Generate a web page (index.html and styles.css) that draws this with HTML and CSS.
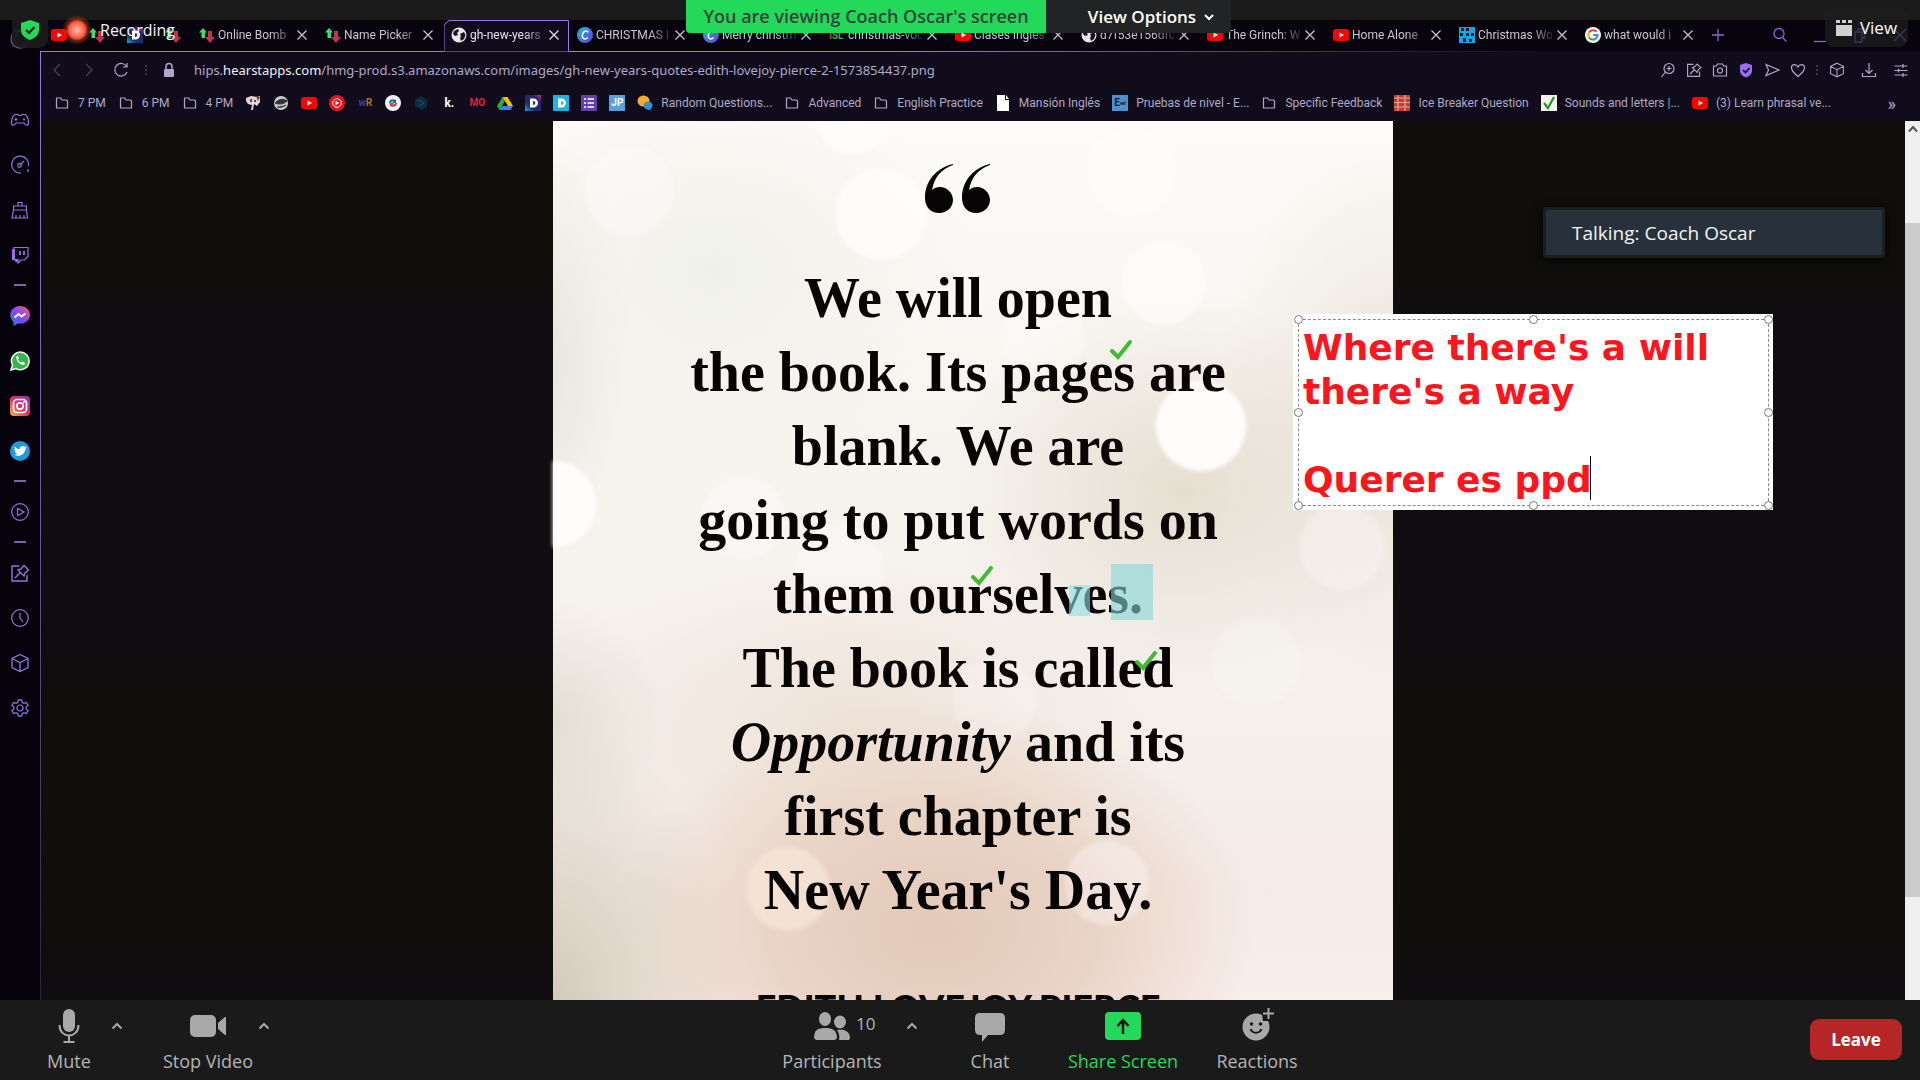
FILE: index.html
```html
<!DOCTYPE html>
<html lang="en">
<head>
<meta charset="utf-8">
<title>Screen share</title>
<link rel="stylesheet" href="styles.css">
</head>
<body>
<svg class="defs" aria-hidden="true">
  <defs>
    <linearGradient id="g-canva" x1="0" y1="0" x2="1" y2="1"><stop offset="0" stop-color="#19c3d8"/><stop offset="1" stop-color="#6a35d9"/></linearGradient>
    <linearGradient id="g-msg" x1="0" y1="1" x2="1" y2="0"><stop offset="0" stop-color="#1a7cf5"/><stop offset=".5" stop-color="#8a45f0"/><stop offset="1" stop-color="#f7605f"/></linearGradient>
    <linearGradient id="g-ig" x1="0" y1="1" x2="1" y2="0"><stop offset="0" stop-color="#fbb34a"/><stop offset=".5" stop-color="#dd2f63"/><stop offset="1" stop-color="#7a3fc0"/></linearGradient>
    <linearGradient id="g-d" x1="0" y1="1" x2="1" y2="0"><stop offset="0" stop-color="#12b9e6"/><stop offset=".3" stop-color="#20296a"/><stop offset=".75" stop-color="#20296a"/><stop offset="1" stop-color="#e01aa0"/></linearGradient>
    <radialGradient id="g-rec"><stop offset="0" stop-color="#ffc0b0"/><stop offset=".45" stop-color="#ff6a55"/><stop offset=".6" stop-color="#e8482f"/><stop offset=".7" stop-color="#b23a14" stop-opacity=".6"/><stop offset="1" stop-color="#b23a14" stop-opacity="0"/></radialGradient>
  </defs>
  <symbol id="yt" viewBox="0 0 16 16"><rect y="2" width="16" height="12" rx="3" fill="#f00"/><path d="M6.500 5.500v5L11 8z" fill="#fff"/></symbol>
  <symbol id="arrows" viewBox="0 0 16 16"><path d="M4 1l4 4.500H6V11H2.500V5.500H0z" fill="#3fdc6a"/><path d="M9 4h4v6h3l-5 6-5-6h3z" fill="#c2344c"/></symbol>
  <symbol id="dd" viewBox="0 0 16 16"><rect width="16" height="16" fill="url(#g-d)"/><path d="M5 3.500h3.500a4.500 4.500 0 0 1 0 9H5zM8 6v4c3 0 3-4 0-4" fill="#fff" fill-rule="evenodd"/></symbol>
  <symbol id="dc" viewBox="0 0 16 16"><rect width="16" height="16" rx="1" fill="#19b5e6"/><path d="M5 3.500h3.500a4.500 4.500 0 0 1 0 9H5zM8 6v4c3 0 3-4 0-4" fill="#fff" fill-rule="evenodd"/></symbol>
  <symbol id="globe" viewBox="0 0 16 16"><circle cx="8" cy="8" r="7.500" fill="#e8e6ec"/><path d="M3 4l4-2 1 2-2 2 1 2-3 1-2-2zM9 7l4-2 1.500 3-1.500 4-3 2-1-3 1-2z" fill="#17141f"/></symbol>
  <symbol id="canva" viewBox="0 0 16 16"><circle cx="8" cy="8" r="8" fill="url(#g-canva)"/><path d="M11 5.500C10.500 3 6.500 3.500 5.500 7.500 4.500 12 8 13 10.800 10.500" fill="none" stroke="#fff" stroke-width="1.500"/></symbol>
  <symbol id="xword" viewBox="0 0 16 16"><rect width="16" height="16" fill="#0fa8ea"/><path d="M2 1h3v3H2zM7 1h3v3H7zM1 6h3v3H1zM7 6h3v3H7zM12 6h3v3h-3zM4 11h3v4H4zM10 12h3v3h-3z" fill="#0a1a38"/></symbol>
  <symbol id="google" viewBox="0 0 16 16"><circle cx="8" cy="8" r="8" fill="#fff"/><g fill="none" stroke-width="2.200"><path d="M11.500 4.800A4.700 4.700 0 0 0 4 5.500" stroke="#ea4335"/><path d="M4 5.500a4.700 4.700 0 0 0 0 5" stroke="#fbbc05"/><path d="M4 10.500a4.700 4.700 0 0 0 7 .9" stroke="#34a853"/><path d="M11 11.400A4.500 4.500 0 0 0 12.500 8H8.200" stroke="#4285f4"/></g></symbol>
  <symbol id="x" viewBox="0 0 10 10"><path d="M.5.5l9 9M9.500.5l-9 9" fill="none" stroke="currentColor" stroke-width="1.200"/></symbol>
  <symbol id="folder" viewBox="0 0 16 16"><path d="M2.500 3H6.500l1.500 2h4.500l1 1v7H2.500z" fill="none" stroke="#b0a9c6" stroke-width="1.200"/></symbol>
  <symbol id="pin" viewBox="0 0 20 20"><path d="M9 3H2v15h15v-6M5 15l5-5M8 7l6 6 1-3 3.500-3L14 2.500 11 6z" fill="none" stroke="currentColor" stroke-width="1.400"/></symbol>
  <symbol id="cube" viewBox="0 0 20 20"><path d="M10 1.500l8 4v9l-8 4-8-4v-9zM2 5.500l8 4 8-4M10 9.500v9" fill="none" stroke="currentColor" stroke-width="1.300"/></symbol>
  <symbol id="up" viewBox="0 0 12 8"><path d="M1.500 6.500L6 2l4.500 4.500" fill="none" stroke="currentColor" stroke-width="2"/></symbol>
  <symbol id="tick" viewBox="0 0 22 20"><path d="M2 11l6 6L20 2" fill="none" stroke="#42ba36" stroke-width="4" stroke-linecap="round"/></symbol>
</svg>

<div class="strip"></div>

<main class="browser">
  <nav class="sidebar" aria-label="Sidebar">
    <svg class="opera" viewBox="0 0 20 20"><g fill="none" stroke="#6a5a94" stroke-width="1.300"><circle cx="10" cy="10" r="9"/><ellipse cx="10" cy="10" rx="4.500" ry="8"/></g></svg>
    <button class="side-btn" aria-label="Gaming"><svg viewBox="0 0 20 20"><path d="M5 4.500h3l1 1h2l1-1h3c2 1 3 4 3.500 7 .5 4-2.500 5-4.500 1.500h-8C4 16.500 1 15.500 1.500 11.500 2 8.500 3 5.500 5 4.500zM4.500 9.500h3M6 8v3M13 9.500h2M14 8.500v2"/></svg></button>
    <button class="side-btn" aria-label="Limiter"><svg viewBox="0 0 20 20"><path d="M11 18a8.500 8.500 0 1 1 7.500-7M18 14v3M10 10l4-4"/><circle cx="9.500" cy="10.500" r="1.800"/></svg></button>
    <button class="side-btn" aria-label="Cleaner"><svg viewBox="0 0 20 20"><path d="M8 6V2.500h4V6M3.500 10V6h13v4M3.500 10h13l1 8H2zM6 18v-3M10 18v-3M14 18v-3"/></svg></button>
    <button class="side-btn" aria-label="Twitch"><svg viewBox="0 0 20 20"><path d="M4 2.500h14v9L14.500 15H11l-3 3v-3H4z"/><path d="M2 4h3v10h4l-3 4-1-3H2z" fill="#9a6cf0" stroke="none"/><path d="M10 6v4M14 6v4" stroke-width="1.800"/></svg></button>
    <hr>
    <button class="side-btn" aria-label="Messenger"><svg viewBox="0 0 20 20"><path d="M10 0c6 0 10 4 10 9s-5 9.500-12 8.500L3.500 20v-4C-3 10 1 0 10 0z" fill="url(#g-msg)" stroke="none"/><path d="M4.500 11.500L8.500 8l3 2.500 4-3" stroke="#fff" stroke-width="2"/></svg></button>
    <button class="side-btn" aria-label="WhatsApp"><svg viewBox="0 0 20 20"><path d="M1 19l1.500-5A8.800 8.800 0 1 1 6 17.600z" fill="#38b34e" stroke="#e9f7ea" stroke-width="1.600"/><path d="M6.500 5.500c-1 4 3 8.500 7.500 8.500l1-2-2.500-1.500-1.500 1c-1.500-.5-2.500-1.500-3-3l1-1L8 5z" fill="#fff" stroke="none"/></svg></button>
    <button class="side-btn" aria-label="Instagram"><svg viewBox="0 0 20 20"><rect width="20" height="20" rx="4" fill="url(#g-ig)" stroke="none"/><g stroke="#fff" stroke-width="1.700"><rect x="3.500" y="3.500" width="13" height="13" rx="3.500"/><circle cx="10" cy="10" r="3.200"/></g><circle cx="14" cy="6" r="1" fill="#fff" stroke="none"/></svg></button>
    <button class="side-btn" aria-label="Twitter"><svg viewBox="0 0 20 20"><circle cx="10" cy="10" r="10" fill="#1c9be0" stroke="none"/><path d="M4.500 5.500c1.500 1.700 3.300 2.500 5.300 2.600C9.500 5 13 4 14.700 5.800l1.800-.6-1 1.600 1.200-.2-1.300 1.500C15 14 9 16.500 4 13.800c1.500 0 2.700-.4 3.500-1.100-1.300-.2-2.200-.9-2.500-2h1C4.800 10 4.200 9 4.300 7.900l1 .3C4.300 7.400 4 6.500 4.500 5.500z" fill="#fff" stroke="none"/></svg></button>
    <hr>
    <button class="side-btn" aria-label="Player"><svg viewBox="0 0 20 20"><circle cx="10" cy="10" r="8.300"/><path d="M7.500 6.500v7l6.500-3.500z"/></svg></button>
    <hr>
    <button class="side-btn" aria-label="Pinboards"><svg><use href="#pin"/></svg></button>
    <button class="side-btn" aria-label="History"><svg viewBox="0 0 20 20"><circle cx="10" cy="10" r="8.300"/><path d="M10 5v5l3 4"/></svg></button>
    <button class="side-btn" aria-label="Extensions"><svg><use href="#cube"/></svg></button>
    <button class="side-btn" aria-label="Settings"><svg viewBox="0 0 20 20"><path d="M8.300 1.800h3.400l.5 2.500 1.800 1 2.400-.8 1.700 2.900L16.200 9v2l1.900 1.600-1.700 2.900-2.400-.8-1.800 1-.5 2.500H8.300l-.5-2.500-1.800-1-2.400.8-1.700-2.900L3.800 11V9L1.900 7.400l1.700-2.900 2.400.8 1.800-1z"/><circle cx="10" cy="10" r="3"/></svg></button>
  </nav>

  <section class="window">
    <header class="tabs">
      <button class="pinned" aria-label="YouTube"><svg><use href="#yt"/></svg></button>
      <button class="pinned" aria-label="Picker"><svg><use href="#arrows"/></svg></button>
      <button class="pinned" aria-label="Dictionary"><svg><use href="#dd"/></svg></button>
      <button class="pinned" aria-label="Picker wheel"><svg><use href="#arrows"/></svg></button>
      <div class="tab"><svg><use href="#arrows"/></svg><span>Online Bomb</span><button aria-label="Close"><svg><use href="#x"/></svg></button></div>
      <div class="tab"><svg><use href="#arrows"/></svg><span>Name Picker</span><button aria-label="Close"><svg><use href="#x"/></svg></button></div>
      <div class="tab active"><svg class="outline" viewBox="0 0 126 32"><path d="M0 31.500V5L5 .5H124.500V31.500" fill="#110c1c" stroke="#9a78e8"/></svg><svg><use href="#globe"/></svg><span>gh-new-years</span><button aria-label="Close"><svg><use href="#x"/></svg></button></div>
      <div class="tab"><svg><use href="#canva"/></svg><span>CHRISTMAS I</span><button aria-label="Close"><svg><use href="#x"/></svg></button></div>
      <div class="tab"><svg><use href="#canva"/></svg><span>Merry christm</span><button aria-label="Close"><svg><use href="#x"/></svg></button></div>
      <div class="tab"><b class="isl"><i>I</i>SL</b><span>christmas-voc</span><button aria-label="Close"><svg><use href="#x"/></svg></button></div>
      <div class="tab"><svg><use href="#yt"/></svg><span>Clases inglés</span><button aria-label="Close"><svg><use href="#x"/></svg></button></div>
      <div class="tab"><svg><use href="#globe"/></svg><span>d7f53e156df0</span><button aria-label="Close"><svg><use href="#x"/></svg></button></div>
      <div class="tab"><svg><use href="#yt"/></svg><span>The Grinch: W</span><button aria-label="Close"><svg><use href="#x"/></svg></button></div>
      <div class="tab"><svg><use href="#yt"/></svg><span>Home Alone</span><button aria-label="Close"><svg><use href="#x"/></svg></button></div>
      <div class="tab"><svg><use href="#xword"/></svg><span>Christmas Wo</span><button aria-label="Close"><svg><use href="#x"/></svg></button></div>
      <div class="tab"><svg><use href="#google"/></svg><span>what would i</span><button aria-label="Close"><svg><use href="#x"/></svg></button></div>
      <button class="plus" aria-label="New tab"><svg viewBox="0 0 12 12"><path d="M6 0v12M0 6h12"/></svg></button>
      <div class="win-ctl">
        <button aria-label="Search tabs"><svg viewBox="0 0 16 16"><circle cx="7" cy="6.500" r="5"/><path d="M10.500 10.500l4 4"/></svg></button>
        <button aria-label="Minimise"><svg viewBox="0 0 16 16"><path d="M2 14.500h12"/></svg></button>
        <button aria-label="Restore"><svg viewBox="0 0 16 16"><path d="M3 5h7v10H3zM6 5V2h7v9h-3"/></svg></button>
        <button aria-label="Close window"><svg viewBox="0 0 16 16"><path d="M2 2l12 12M14 2L2 14"/></svg></button>
      </div>
    </header>

    <div class="toolbar">
      <button class="dim" aria-label="Back"><svg viewBox="0 0 16 16"><path d="M11 2L5 8l6 6"/></svg></button>
      <button class="dim" aria-label="Forward"><svg viewBox="0 0 16 16"><path d="M5 2l6 6-6 6"/></svg></button>
      <button aria-label="Reload"><svg viewBox="0 0 16 16"><path d="M13.500 4.500A6.300 6.300 0 1 0 14 10M14 1v4h-4"/></svg></button>
      <span class="dots"></span>
      <svg class="lock" viewBox="0 0 16 16"><path d="M5 7V4.500a3 3 0 0 1 6 0V7" fill="none" stroke="#b0a9c6" stroke-width="1.500"/><rect x="3" y="7" width="10" height="8" rx="1" fill="#b0a9c6"/></svg>
      <div class="url">hips.<b>hearstapps.com</b>/hmg-prod.s3.amazonaws.com/images/gh-new-years-quotes-edith-lovejoy-pierce-2-1573854437.png</div>
      <div class="tools">
        <button aria-label="Zoom"><svg viewBox="0 0 16 16"><circle cx="9" cy="6.500" r="5"/><path d="M5.500 10L1.500 15M9 4v5M6.500 6.500h5"/></svg></button>
        <button aria-label="Pin page"><svg><use href="#pin"/></svg></button>
        <button aria-label="Snapshot"><svg viewBox="0 0 16 16"><path d="M1.500 4h3l1-2h5l1 2h3v10h-13z"/><circle cx="8" cy="8.500" r="2.500"/></svg></button>
        <button aria-label="Ad blocker"><svg viewBox="0 0 16 16"><path d="M8 1l6 2v6c0 3-3 5.500-6 6.500-3-1-6-3.500-6-6.500V3z" fill="#9a6cf5" stroke="none"/><path d="M5 8l2.500 2.500L11.500 6" stroke="#110c1c" stroke-width="1.700"/></svg></button>
        <button aria-label="Send"><svg viewBox="0 0 16 16"><path d="M2 2.500L15 8 2 13.500 4.500 8z"/></svg></button>
        <button aria-label="Favourite"><svg viewBox="0 0 16 16"><path d="M8 14.500C3 10.500 1 8 1.500 5 2 2 6.500 1.500 8 5c1.500-3.500 6-3 6.500 0 .5 3-1.500 5.500-6.500 9.500z"/></svg></button>
        <span class="dots"></span>
      </div>
      <div class="tools wide">
        <button aria-label="Extensions"><svg><use href="#cube"/></svg></button>
        <button aria-label="Downloads"><svg viewBox="0 0 16 16"><path d="M8 1v10M4.500 8L8 11.500 11.500 8M1.500 11v3.500h13V11"/></svg></button>
        <button aria-label="Easy setup"><svg viewBox="0 0 16 16"><path d="M1.500 4h13M1.500 8.500h13M1.500 13h13M10 2v4M5.500 6.500v4M10 11v4"/></svg></button>
      </div>
    </div>

    <nav class="bookmarks" aria-label="Bookmarks">
      <a href="#"><svg><use href="#folder"/></svg>7 PM</a>
      <a href="#"><svg><use href="#folder"/></svg>6 PM</a>
      <a href="#"><svg><use href="#folder"/></svg>4 PM</a>
      <a href="#" aria-label="Face"><svg viewBox="0 0 16 16"><path d="M1 3l5-2 6 1 3-1v6l-3 4-3-2-1 6H6l1-5-4-1-2-3z" fill="#dcd8d8"/><path d="M11 1l4 1-2 4zM5 4h2v3H5zM9 5h2v2H9z" fill="#7d3a3a"/></svg></a>
      <a href="#" aria-label="Disc"><svg viewBox="0 0 16 16"><circle cx="8" cy="8" r="7" fill="#c9c9cf"/><path d="M2 8c4-4 8-5 12-2-3 3-8 4-12 2zM4 12c3 1 6 0 9-2" fill="#333" stroke="#333"/></svg></a>
      <a href="#" aria-label="YouTube"><svg><use href="#yt"/></svg></a>
      <a href="#" aria-label="YouTube Music"><svg viewBox="0 0 16 16"><circle cx="8" cy="8" r="8" fill="#e8131d"/><circle cx="8" cy="8" r="4.300" fill="none" stroke="#fff"/><path d="M6.500 5.800v4.400L10.300 8z" fill="#fff"/></svg></a>
      <a href="#" aria-label="WordReference"><b class="fav wr">w<i>R</i></b></a>
      <a href="#" aria-label="Reverso"><svg viewBox="0 0 16 16"><circle cx="8" cy="8" r="8" fill="#f4f7f8"/><path d="M4 8c0-3 3-5 6-3l1-1v4H7l1.500-1.500C7 6 6 7 6 8z" fill="#1c6a94"/><path d="M12 8c0 3-3 5-6 3l-1 1V8h4l-1.500 1.500C9 10 10 9 10 8z" fill="#d8333a"/></svg></a>
      <a href="#" aria-label="DeepL"><svg viewBox="0 0 16 16"><path d="M8 1l6 3.500v7L10 14v2l-3-2-5-2.500v-7z" fill="#0d2b3e"/><path d="M5 5l6 3-5 3" fill="none" stroke="#1d5566"/></svg></a>
      <a href="#" aria-label="Kahoot"><b class="fav k">k.</b></a>
      <a href="#" aria-label="Mosalingua"><b class="fav mo">MO</b></a>
      <a href="#" aria-label="Drive"><svg viewBox="0 0 16 16"><path d="M5.500 2L0 11l2.500 4L8 6z" fill="#2da94f"/><path d="M5.500 2h5L16 11h-5z" fill="#fbbc05"/><path d="M5 11h11l-2.500 4h-11z" fill="#3f7ff0"/></svg></a>
      <a href="#" aria-label="Dictionary"><svg><use href="#dd"/></svg></a>
      <a href="#" aria-label="Dictionary"><svg><use href="#dc"/></svg></a>
      <a href="#" aria-label="Forms"><svg viewBox="0 0 16 16"><rect width="16" height="16" rx="1" fill="#6440a8"/><path d="M3 4h2M3 8h2M3 12h2M6.500 4H13M6.500 8H13M6.500 12H13" stroke="#fff" stroke-width="1.700"/></svg></a>
      <a href="#" aria-label="JP"><b class="fav jp">JP</b></a>
      <a href="#"><svg viewBox="0 0 16 16"><ellipse cx="6.500" cy="6" rx="6" ry="5.500" fill="#f4ae2a"/><ellipse cx="11" cy="10.500" rx="4.500" ry="4" fill="#3a8fd0"/><path d="M12 13l3 3-5-2z" fill="#3a8fd0"/></svg>Random Questions...</a>
      <a href="#"><svg><use href="#folder"/></svg>Advanced</a>
      <a href="#"><svg><use href="#folder"/></svg>English Practice</a>
      <a href="#"><svg viewBox="0 0 16 16"><path d="M2 0h8v5h4v11H2zM11 0l3 4h-3z" fill="#fff"/></svg>Mansión Inglés</a>
      <a href="#"><b class="fav ew">E<i>wl</i></b>Pruebas de nivel - E...</a>
      <a href="#"><svg><use href="#folder"/></svg>Specific Feedback</a>
      <a href="#"><svg viewBox="0 0 16 16"><rect width="16" height="16" fill="#c43c30"/><path d="M0 3h16M0 7.500h16M0 12h16M4 0v16M11 0v16" stroke="#e8a39a" stroke-width="1.200"/></svg>Ice Breaker Question</a>
      <a href="#"><svg viewBox="0 0 16 16"><rect width="16" height="16" fill="#f6f4ea"/><path d="M3 8l4 5 6-11" fill="none" stroke="#23952f" stroke-width="2.200"/></svg>Sounds and letters |...</a>
      <a href="#"><svg><use href="#yt"/></svg>(3) Learn phrasal ve...</a>
      <button class="more" aria-label="More bookmarks">»</button>
    </nav>

    <div class="page">
      <div class="canvas">
        <figure class="poster">
          <svg class="bokeh" viewBox="0 0 840 879" preserveAspectRatio="xMidYMin slice" aria-hidden="true">
            <g fill="#fffdfc">
              <circle cx="300" cy="-5" r="38" opacity=".9"/>
              <circle cx="328" cy="93" r="46" opacity=".75"/>
              <circle cx="76" cy="70" r="45" opacity=".4"/>
              <circle cx="611" cy="162" r="42" opacity=".6"/>
              <circle cx="578" cy="52" r="45" opacity=".5"/>
              <circle cx="648" cy="305" r="45"/>
              <circle cx="0" cy="383" r="43"/>
              <circle cx="789" cy="426" r="43" opacity=".3"/>
              <circle cx="190" cy="397" r="42" opacity=".4"/>
              <circle cx="287" cy="450" r="45" opacity=".35"/>
              <circle cx="490" cy="218" r="42" opacity=".35"/>
              <circle cx="703" cy="541" r="45" opacity=".2"/>
              <circle cx="442" cy="580" r="42" opacity=".25"/>
              <circle cx="554" cy="762" r="42" opacity=".35"/>
            </g>
            <circle cx="235" cy="768" r="42" fill="#f7e6d8" opacity=".75"/>
          </svg>
          <svg class="quote-mark" viewBox="0 0 66 49" aria-hidden="true"><path d="M28 0C12 4 0 16 0 34c0 9 6 15 14 15s14-6 14-13-6-13-13-13c-3 0-6 1-8 3C9 14 16 5 28 1zM65 0C49 4 37 16 37 34c0 9 6 15 14 15s14-6 14-13-6-13-13-13c-3 0-6 1-8 3C46 14 53 5 65 1z" fill="#050303"/></svg>
          <blockquote>We will open<br>the book. Its pages are<br>blank. We are<br>going to put words on<br>them ourselves.<br>The book is called<br><em>Opportunity</em> and its<br>first chapter is<br>New Year's Day.</blockquote>
          <figcaption>EDITH LOVEJOY PIERCE</figcaption>
          <span class="mark small"></span>
          <span class="mark large"></span>
          <svg class="tick t1"><use href="#tick"/></svg>
          <svg class="tick t2"><use href="#tick"/></svg>
          <svg class="tick t3"><use href="#tick"/></svg>
        </figure>
      </div>
      <div class="scrollbar"><svg viewBox="0 0 10 8"><path d="M1 6.500L5 2l4 4.500" fill="none" stroke="#555" stroke-width="2"/></svg><div class="thumb"></div></div>
    </div>
  </section>

  <div class="note">
    <textarea aria-label="Annotation text" spellcheck="false">Where there's a will
there's a way

Querer es ppd</textarea>
    <span class="caret"></span>
    <i class="h nw"></i><i class="h n"></i><i class="h ne"></i><i class="h w"></i><i class="h e"></i><i class="h sw"></i><i class="h s"></i><i class="h se"></i>
  </div>
  <div class="talking">Talking: Coach Oscar</div>
</main>

<footer class="meeting">
  <div class="group left">
    <button class="ctl mute"><svg viewBox="0 0 36 36"><rect x="12" y="1" width="12" height="23" rx="6" fill="#a8a8a8"/><path d="M8.500 17c0 14 19 14 19 0M18 28v6M12.500 34h11" fill="none" stroke="#a8a8a8" stroke-width="2"/></svg>Mute</button>
    <button class="arrow" aria-label="Audio options"><svg><use href="#up"/></svg></button>
    <button class="ctl video"><svg viewBox="0 0 36 36"><rect y="7" width="26" height="22" rx="5" fill="#a8a8a8"/><path d="M28 15l7-6h1v18h-1l-7-6z" fill="#a8a8a8"/></svg>Stop Video</button>
    <button class="arrow" aria-label="Video options"><svg><use href="#up"/></svg></button>
  </div>
  <div class="group">
    <button class="ctl people"><svg viewBox="0 0 36 36"><g fill="#a8a8a8"><ellipse cx="11" cy="11" rx="6" ry="7"/><path d="M0 30c0-8 4-10 11-10s12 2 12 10l-2 2H2z"/><ellipse cx="26" cy="14" rx="6" ry="6.500"/><path d="M25 32c1-4 0-7-2-10 7-1 13 1 13 8l-1 2z"/></g></svg>Participants<span class="count">10</span></button>
    <button class="arrow wide" aria-label="Participant options"><svg><use href="#up"/></svg></button>
    <button class="ctl chat"><svg viewBox="0 0 36 36"><path d="M8 5h20q5 0 5 5v12q0 5-5 5h-12l-6 7v-7H8q-5 0-5-5V10q0-5 5-5z" fill="#a8a8a8"/></svg>Chat</button>
    <button class="ctl share"><svg viewBox="0 0 36 36"><rect y="4" width="36" height="28" rx="4" fill="#23d959"/><path d="M18 26V12.500M12.500 18l5.500-6 5.500 6" fill="none" stroke="#111" stroke-width="2.500"/></svg>Share Screen</button>
    <button class="ctl react"><svg viewBox="0 0 36 36"><circle cx="17" cy="19" r="13.500" fill="#a8a8a8"/><path d="M22 0h14v13H24z" fill="#1a1a1a"/><path d="M29.500 0v11M24 5.500h11" stroke="#a8a8a8" stroke-width="2"/><path d="M11.500 21c2 5 9 5 11 0" fill="none" stroke="#1a1a1a" stroke-width="2"/><circle cx="12.500" cy="16" r="1.800" fill="#1a1a1a"/><circle cx="21.500" cy="16" r="1.800" fill="#1a1a1a"/></svg>Reactions</button>
  </div>
  <button class="leave">Leave</button>
</footer>

<div class="banner"><span class="viewing">You are viewing Coach Oscar's screen</span><button class="options">View Options<svg viewBox="0 0 12 8"><path d="M2 2l4 4 4-4" fill="none" stroke="#fff" stroke-width="2"/></svg></button></div>
<div class="rec"><span class="shield"><svg viewBox="0 0 20 20"><path d="M10 0l9 3v7c0 5-4 8-9 10-5-2-9-5-9-10V3z" fill="#23d959"/><path d="M6 10l3 3 5.500-6" fill="none" stroke="#1c1c1c" stroke-width="2.200"/></svg></span><svg class="dot" viewBox="0 0 30 30"><circle cx="15" cy="15" r="15" fill="url(#g-rec)"/></svg>Recording</div>
<button class="view"><svg viewBox="0 0 16 16"><path d="M0 0h4v3H0zM6 0h4v3H6zM12 0h4v3h-4zM0 5h16v11H0z" fill="#d0d0d0"/></svg>View</button>
</body>
</html>
```
FILE: styles.css
```css
* { box-sizing: border-box; }

body {
  margin: 0;
  height: 100vh;
  overflow: hidden;
  display: flex;
  flex-direction: column;
  background: #1b1b1b;
  color: #b0a9c6;
  font-family: "Noto Sans", "Open Sans", sans-serif;
  font-size: 12px;
}

button {
  margin: 0;
  padding: 0;
  border: 0;
  background: none;
  color: inherit;
  font: inherit;
  display: flex;
  align-items: center;
  justify-content: center;
}

.defs { position: absolute; width: 0; height: 0; }
.strip { height: 20px; flex: none; }

.browser {
  flex: 1;
  min-height: 0;
  display: flex;
  position: relative;
  background: #08040e;
}

/* Sidebar */
.sidebar {
  width: 40px;
  flex: none;
  display: flex;
  flex-direction: column;
  align-items: center;
  padding-top: 9px;
  background: #06020c;
  color: #9575dc;
}
.opera { width: 20px; height: 20px; margin-bottom: 48px; flex: none; }
.side-btn { width: 40px; height: 45px; flex: none; }
.side-btn svg {
  width: 20px;
  height: 20px;
  fill: none;
  stroke: #9575dc;
  stroke-width: 1.200;
}
.sidebar hr {
  width: 12px;
  height: 2px;
  margin: 7px 0;
  border: 0;
  background: #7b63b0;
  flex: none;
}

/* Browser window */
.window {
  flex: 1;
  min-width: 0;
  display: flex;
  flex-direction: column;
  position: relative;
  background: #110c1c;
}
.window::before {
  content: "";
  position: absolute;
  left: 0;
  top: 31px;
  bottom: 0;
  width: 1px;
  background: linear-gradient(#9a78e8, #6d5a9c 50%, #2a2438);
}

.tabs {
  height: 32px;
  flex: none;
  display: flex;
  padding-bottom: 2px;
  font-family: Roboto, "Noto Sans", sans-serif;
  background: #08040e linear-gradient(90deg, #9a78e8 30%, #9a78e8 45%, #110c1c 80%) bottom / 100% 1px no-repeat;
}
.pinned { width: 38px; flex: none; }
.pinned svg, .tab > svg { width: 16px; height: 16px; flex: none; }
.tab {
  flex: 0 1 126px;
  min-width: 0;
  display: flex;
  align-items: center;
  padding: 0 11px 0 7px;
  color: #c9c6d0;
  position: relative;
}
.tab span {
  flex: 1;
  min-width: 0;
  margin-left: 3px;
  overflow: hidden;
  white-space: nowrap;
  position: relative;
  -webkit-mask-image: linear-gradient(90deg, #000 72%, #0003);
  mask-image: linear-gradient(90deg, #000 72%, #0003);
}
.tab button { width: 10px; flex: none; margin-left: 5px; position: relative; }
.tab button svg { width: 10px; height: 10px; }
.tab > svg.outline {
  position: absolute;
  left: 0;
  top: 0;
  width: 126px;
  height: 32px;
}
.tab > svg:not(.outline) { position: relative; }
.active { color: #e6e3ee; }
.isl { width: 16px; flex: none; font-size: 10px; color: #45a35c; }
.isl i { font-style: normal; color: #d5402a; }
.plus { width: 28px; flex: none; }
.plus svg { width: 12px; height: 12px; }
.plus svg, .win-ctl svg { fill: none; stroke: #8766d2; stroke-width: 1.300; }
.win-ctl {
  margin-left: auto;
  display: flex;
  align-items: center;
  gap: 24px;
  padding-right: 12px;
}
.win-ctl svg { width: 16px; height: 16px; display: block; }

.toolbar {
  height: 37px;
  flex: none;
  display: flex;
  align-items: center;
  padding: 0 11px 2px 9px;
}
.toolbar svg {
  width: 16px;
  height: 16px;
  fill: none;
  stroke: #b0a9c6;
  stroke-width: 1.200;
  color: #b0a9c6;
}
.toolbar > button { width: 16px; margin-right: 16px; }
.toolbar .dim { opacity: .35; }
.dots {
  width: 2px;
  height: 10px;
  background: repeating-linear-gradient(#3a3449 0 2px, transparent 2px 4px);
}
.toolbar svg.lock { margin: 0 17px 0 14px; stroke: none; }
.url { flex: 1; min-width: 0; font-size: 13px; white-space: nowrap; }
.url b { font-weight: 400; color: #f3f0fa; }
.tools { display: flex; align-items: center; gap: 10px; }
.tools.wide { gap: 16px; margin-left: 11px; }

.bookmarks {
  height: 32px;
  flex: none;
  display: flex;
  align-items: center;
  gap: 12px;
  padding: 0 24px 4px 14px;
  white-space: nowrap;
  font-family: Roboto, "Noto Sans", sans-serif;
  font-size: 12px;
}
.bookmarks a {
  display: flex;
  align-items: center;
  gap: 8px;
  color: inherit;
  text-decoration: none;
}
.bookmarks svg { width: 16px; height: 16px; flex: none; }
.fav {
  width: 16px;
  height: 16px;
  flex: none;
  display: flex;
  align-items: center;
  justify-content: center;
  font-size: 10px;
  line-height: 16px;
}
.fav i { font-style: normal; }
.wr { color: #3c3f9a; }
.wr i { color: #c0662c; }
.k { color: #fff; font-size: 12px; }
.mo { color: #e01f3c; }
.jp { background: #5a9fe0; color: #fff; }
.ew { background: #4f8fd0; color: #0b1a3a; }
.ew i { font-size: 6px; }
.more { margin-left: auto; font-size: 18px; }

/* Shared page */
.page { flex: 1; min-height: 0; display: flex; padding-left: 1px; }
.canvas {
  flex: 1;
  min-width: 0;
  overflow: hidden;
  display: flex;
  justify-content: center;
  background: linear-gradient(#0f0e0b 0, #0f0e0b 16%, #0f0d10 22%, #0f0d10 60%, #0f0e0b 68%, #0f0e0b 90%, #0f0d10);
}
.scrollbar {
  width: 15px;
  flex: none;
  padding-top: 4px;
  background: #f1f0f1;
  display: flex;
  flex-direction: column;
  align-items: center;
}
.scrollbar svg { width: 10px; height: 8px; margin-bottom: 90px; flex: none; }
.thumb { width: 15px; height: 77%; background: #cdcccd; }

.poster {
  position: relative;
  width: 840px;
  margin: 0;
  height: 960px;
  flex: none;
  padding: 43px 30px 0 0;
  display: flex;
  flex-direction: column;
  align-items: center;
  color: #070403;
  background:
    radial-gradient(ellipse 320px 230px at 380px 810px, #e3c9b8 0, #e3c9b8b0 50%, transparent),
    radial-gradient(ellipse 240px 200px at 630px 370px, #e5dfd1 0, transparent),
    radial-gradient(ellipse 190px 280px at 0 880px, #d2cbba 0, transparent),
    radial-gradient(ellipse 260px 200px at 160px 150px, #f0f0ea 0, transparent),
    radial-gradient(ellipse 180px 280px at 840px 300px, #e9e3da 0, transparent),
    radial-gradient(ellipse 80px 200px at 0 220px, #e6e2da 0, transparent),
    radial-gradient(ellipse 110px 120px at 0 600px, #e3dfd4 0, transparent),
    radial-gradient(ellipse 300px 160px at 300px 600px, #efe3d8 0, transparent),
    linear-gradient(#fdfbf8 0, #f7f4f0 35%, #f5f0ec 60%, #f5ebe6 80%, #faefed);
}
.bokeh { position: absolute; left: 0; top: 0; width: 100%; height: 879px; filter: blur(2px); }
.quote-mark { width: 66px; height: 49px; position: relative; }
blockquote {
  position: relative;
  margin: 48px 0 0;
  font: 700 56px/74px "Liberation Serif", serif;
  text-align: center;
  white-space: nowrap;
}
figcaption {
  position: relative;
  margin-top: 60px;
  font: 900 36px/40px Lato, sans-serif;
  white-space: nowrap;
}
.mark { position: absolute; background: #8fe0e6; opacity: .6; }
.mark.small { left: 516px; top: 464px; width: 21px; height: 31px; }
.mark.large { left: 558px; top: 443px; width: 42px; height: 56px; background: #83d6d8; }
.tick { position: absolute; width: 22px; height: 20px; }
.t1 { left: 557px; top: 219px; }
.t2 { left: 418px; top: 445px; }
.t3 { left: 582px; top: 530px; }

/* Annotation box */
.note {
  position: absolute;
  right: 147px;
  top: 294px;
  width: 480px;
  height: 196px;
  padding: 5px 4px 4px 5px;
  background: #fff;
}
.note textarea {
  display: block;
  width: 100%;
  height: 100%;
  padding: 6px 4px;
  border: 1px dashed #8a8a8a;
  outline: 0;
  resize: none;
  overflow: hidden;
  background: #fff;
  color: #fc151c;
  font: 700 36px/44px "DejaVu Sans", "Noto Sans", sans-serif;
}
.caret { position: absolute; left: 297px; top: 142px; width: 1px; height: 44px; background: #000; }
.h {
  position: absolute;
  width: 9px;
  height: 9px;
  border: 1px solid #777;
  border-radius: 50%;
  background: #fff;
}
.nw, .n, .ne { top: 1px; }
.w, .e { top: 94px; }
.sw, .s, .se { bottom: 0; }
.nw, .w, .sw { left: 1px; }
.n, .s { left: 236px; }
.ne, .e, .se { right: 0; }

.talking {
  position: absolute;
  right: 35px;
  top: 187px;
  width: 342px;
  height: 51px;
  padding-left: 26px;
  border: 3px solid #1c1f20;
  border-radius: 3px;
  background: #27313b;
  box-shadow: 0 2px 10px #000;
  color: #f2f4f6;
  font-family: "Open Sans", sans-serif;
  font-size: 19px;
  line-height: 46px;
}

/* Meeting controls */
.meeting {
  height: 80px;
  flex: none;
  display: flex;
  justify-content: space-between;
  align-items: flex-start;
  padding: 0 18px 0 29px;
  background: #1a1a1a;
  color: #b4b4b4;
  font-family: "Open Sans", sans-serif;
  font-size: 18px;
  line-height: 24px;
}
.group { display: flex; }
.group.left { padding-right: 6px; }
.ctl {
  position: relative;
  flex-direction: column;
  padding-top: 8px;
  gap: 5px;
  white-space: nowrap;
}
.ctl svg { width: 36px; height: 36px; }
.mute { width: 80px; }
.video { width: 92px; margin: 0 2px 0 37px; }
.people { width: 128px; }
.chat { width: 124px; }
.share { width: 142px; color: #23d959; }
.react { width: 126px; }
.count { position: absolute; left: 88px; top: 12px; font-size: 17px; }
.arrow { width: 16px; height: 52px; }
.arrow.wide { width: 32px; }
.arrow svg { width: 12px; height: 8px; color: #a8a8a8; }
.leave {
  width: 92px;
  height: 41px;
  margin-top: 19px;
  border-radius: 9px;
  background: #b72626;
  color: #fff;
  font-size: 17px;
  font-weight: 700;
}

/* Floating meeting overlays */
.banner {
  position: absolute;
  left: 686px;
  top: 0;
  height: 33px;
  display: flex;
  font: 600 18px/33px "Open Sans", sans-serif;
}
.viewing { width: 360px; text-align: center; background: #23d959; color: #34453a; border-radius: 0 0 0 4px; }
.options { width: 185px; padding-left: 26px; gap: 7px; background: #222324; color: #fff; font-size: 17px; border-radius: 0 0 4px 0; }
.options svg { width: 12px; height: 8px; }
.rec {
  position: absolute;
  left: 12px;
  top: 12px;
  height: 36px;
  display: flex;
  align-items: center;
  color: #f4f4f4;
  font-family: "Open Sans", sans-serif;
  font-size: 16px;
}
.shield {
  width: 36px;
  height: 36px;
  display: flex;
  align-items: center;
  justify-content: center;
  border-radius: 9px;
  background: #1c1c1ce6;
}
.shield svg { width: 20px; height: 20px; }
.dot { width: 30px; height: 30px; margin: 0 8px 0 14px; }
.view {
  position: absolute;
  right: 12px;
  top: 8px;
  width: 83px;
  height: 39px;
  gap: 8px;
  border-radius: 9px;
  background: #1f1f1fb0;
  color: #fff;
  font-family: "Open Sans", sans-serif;
  font-size: 17px;
}
.view svg { width: 16px; height: 16px; }
```
